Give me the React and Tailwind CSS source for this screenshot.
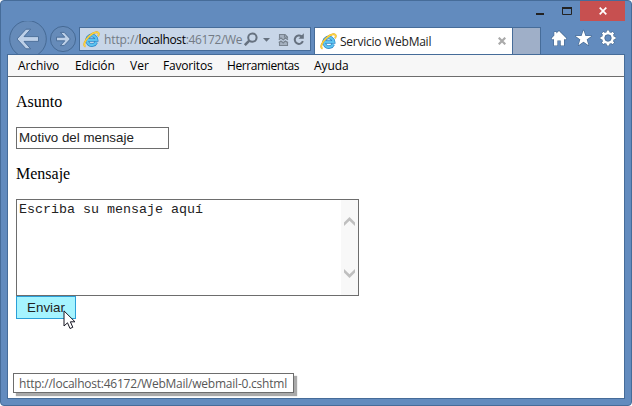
import React from 'react';

const ui = "font-['Open_Sans','Noto_Sans',sans-serif]";

function IELogo({ className }) {
  return (
    <svg className={className} width="17" height="17" viewBox="0 0 17 17" fill="none">
      <path d="M13.2 11.2A4.8 4.8 0 1 1 13.6 9H5" stroke="#2b86c8" strokeWidth="3.6" />
      <path d="M13.2 11.2A4.8 4.8 0 1 1 13.6 9H5" stroke="#5cc3f0" strokeWidth="2.2" />
      <path d="M2.4 15.6C-.2 14.7 1.7 9.4 6.3 5.1C10.7 1 15.2 .2 15.7 2.5C15.9 3.4 15.6 4.3 15.1 5.2" stroke="#e0a320" strokeWidth="1.8" />
      <path d="M2.4 15.6C-.2 14.7 1.7 9.4 6.3 5.1C10.7 1 15.2 .2 15.7 2.5C15.9 3.4 15.6 4.3 15.1 5.2" stroke="#fcd541" strokeWidth="1.2" />
    </svg>
  );
}

function NavButtons() {
  return (
    <svg className="h-[33px] w-[70px] shrink-0 overflow-hidden" viewBox="8 21 70 33">
      <circle cx="28" cy="39" r="18.3" fill="#668bb9" stroke="#466a95" />
      <circle cx="63" cy="39" r="12.6" fill="#668bb9" stroke="#466a95" />
      <path d="M17 39L26 29.2H30.6L24 36.6H38.5V41.4H24L30.6 48.8H26Z" fill="#bdd0e8" stroke="#466a95" strokeWidth=".9" />
      <path d="M70.3 39L64.2 32.4H60.4L64.8 37.2H56.5V40.8H64.8L60.4 45.6H64.2Z" fill="#bdd0e8" stroke="#466a95" strokeWidth=".9" />
    </svg>
  );
}

function AddressBar() {
  return (
    <div className={`${ui} ml-px mt-[6px] flex h-6 w-[232px] shrink-0 border border-[#466c99] bg-[#c8d6e8] text-[12px] leading-[24px] text-[#737b85]`}>
      <IELogo className="ml-[3px] mt-[3px] shrink-0" />
      <div className="ml-[4px] w-[138px] whitespace-nowrap tracking-[-0.35px]">
        <span className="tracking-[-0.1px]">http://</span><span className="tracking-[-0.35px] text-black">localhost</span>:46172/We
      </div>
      <svg className="shrink-0" width="68" height="22" viewBox="242 28 68 22" fill="none">
        <circle cx="252.4" cy="37.6" r="4.2" stroke="#66717f" strokeWidth="2" />
        <path d="M249.3 40.7L244.8 45.2" stroke="#66717f" strokeWidth="2.6" />
        <path d="M263 38H270L266.5 41.7Z" fill="#66717f" />
        <path d="M279.5 38.5V34.5H285L287.5 37V38.5M284.5 34.5V37H287.5M279.5 42V45.5H287.5V42" fill="#a5b1c0" stroke="#78838f" strokeWidth="1.1" />
        <path d="M278.8 39.6L281 38L283.2 39.8L285.3 38L288 39.6M278.8 42.6L281 41L283.2 42.8L285.3 41L288 42.6" stroke="#78838f" strokeWidth="1.3" />
        <path d="M301.6 36.4A4.2 4.2 0 1 0 302.9 41.2" stroke="#66717f" strokeWidth="2" />
        <path d="M303.8 33.2V38.7H298.5Z" fill="#66717f" />
      </svg>
    </div>
  );
}

function Tabs() {
  return (
    <div className="ml-[3px] mt-[6px] flex h-[27px] shrink-0">
      <div className={`${ui} flex w-[199px] border border-b-0 border-[#466c99] bg-white text-[12px] leading-[28px] text-[#222]`}>
        <IELogo className="ml-[5px] mt-[5px] shrink-0" />
        <span className="ml-[3px] flex-1 whitespace-nowrap tracking-[-0.24px]">Servicio WebMail</span>
        <svg className="mr-[6px] mt-[9px]" width="8" height="8" viewBox="0 0 8 8">
          <path d="M.7 .7L7.3 7.3M7.3 .7L.7 7.3" stroke="#aaa" strokeWidth="2.2" />
        </svg>
      </div>
      <div className="w-[28px] border border-b-0 border-l-0 border-[#466c99] bg-[#9fafc8]" />
    </div>
  );
}

function Tools() {
  return (
    <svg className="ml-[10px] mt-[8px] shrink-0" width="66" height="19" viewBox="551 29 66 19">
      <g fill="#fff" stroke="#45688f" strokeWidth="1.2" paintOrder="stroke" strokeLinejoin="round">
        <path d="M559 31L566.5 38.4L565 39.7L564 38.8V45.5H560.7V40.5H557.4V45.5H554V38.8L553 39.7L551.5 38.4L554.3 35.6V32H556.4V33.6Z" />
        <path d="M583.5 30.3L585.5 36H591.5L586.7 39.6L588.5 45.3L583.5 41.8L578.5 45.3L580.3 39.6L575.5 36H581.5Z" />
      </g>
      <g fill="none">
        <circle cx="608" cy="38" r="4.7" stroke="#45688f" strokeWidth="3.4" />
        <path d="M608 30V33.5M608 42.5V46M600 38H603.5M612.5 38H616M602.4 32.4L604.9 34.9M611.1 41.1L613.6 43.6M613.6 32.4L611.1 34.9M604.9 41.1L602.4 43.6" stroke="#45688f" strokeWidth="3.8" />
        <circle cx="608" cy="38" r="4.7" stroke="#fff" strokeWidth="2.6" />
        <path d="M608 30.5V34M608 42V45.5M600.5 38H604M612 38H615.5M602.7 32.7L605 35M611 41L613.3 43.3M613.3 32.7L611 35M605 41L602.7 43.3" stroke="#fff" strokeWidth="2.6" />
        <circle cx="608" cy="38" r="3.1" fill="#628bbe" stroke="#45688f" strokeWidth=".6" />
      </g>
    </svg>
  );
}

const menus = [
  ['Archivo', 'w-[57px] tracking-[-0.1px]'],
  ['Edición', 'w-[55px] tracking-[-0.1px]'],
  ['Ver', 'w-[33px]'],
  ['Favoritos', 'w-[64px] tracking-[-0.2px]'],
  ['Herramientas', 'w-[87px] tracking-[-0.4px]'],
  ['Ayuda', 'w-[50px] tracking-[-0.1px]'],
];

export default function App() {
  return (
    <div className="h-[406px] w-[632px] overflow-hidden bg-white">
      <div className="relative flex h-[406px] w-[632px] flex-col rounded-[4px] border border-[#466c99] bg-[#628bbe] px-[6px] pb-[6px]">
        <header className="relative h-[53px] shrink-0">
          <div className="flex h-5 justify-end">
            <svg width="45" height="20" viewBox="535 1 45 20">
              <path d="M536 13H544V15H536Z" fill="#222" />
              <path d="M562.5 8H571.5V14.5H562.5Z" fill="none" stroke="#222" />
              <path d="M562 8H572" stroke="#222" strokeWidth="2" />
            </svg>
            <div className="flex w-[45px] items-center justify-center bg-[#c75050]">
              <svg width="8" height="8" viewBox="0 0 8 8">
                <path d="M.7 .7L7.3 7.3M7.3 .7L.7 7.3" stroke="#fff" strokeWidth="1.7" />
              </svg>
            </div>
          </div>
          <div className="flex h-[33px] pl-px">
            <NavButtons />
            <AddressBar />
            <Tabs />
            <Tools />
          </div>
        </header>

        <main className="flex min-h-0 flex-1 flex-col border border-[#466c99] bg-white">
          <nav className={`${ui} flex h-[22px] shrink-0 border-b border-[#6d6d6d] bg-[#f7f7f7] pl-[10px] text-[12px] leading-[22px] text-black`}>
            {menus.map(([label, cls]) => (
              <span key={label} className={`${cls} whitespace-nowrap`}>{label}</span>
            ))}
          </nav>
          <form className="flex flex-1 flex-col items-start pl-[8px] pt-[16px] font-['Liberation_Serif',serif] text-[16px] leading-[18px] text-black" onSubmit={(e) => e.preventDefault()}>
            <label>Asunto</label>
            <div className="mt-[16px] h-[22px] w-[153px] border border-[#6d6d6d] pl-[2px] font-['Liberation_Sans',sans-serif] text-[13.33px] leading-[20px] text-[#222]">Motivo del mensaje</div>
            <label className="mt-[16px]">Mensaje</label>
            <div className="mt-[16px] flex h-[97px] w-[343px] border border-[#6d6d6d]">
              <div className="flex-1 pl-[2px] pt-[2px] font-['Liberation_Mono',monospace] text-[13.33px] leading-[16px] text-[#222]">Escriba su mensaje aquí</div>
              <div className="flex w-[17px] flex-col items-center justify-between bg-[#f8f8f8] pb-[17px] pt-[17px]">
                <svg width="11" height="9" viewBox="0 0 11 9"><path d="M0 5.5L5.5 0L11 5.5V9L5.5 3.8L0 9Z" fill="#bfbfbf" /></svg>
                <svg width="11" height="9" viewBox="0 0 11 9"><path d="M0 3.5L5.5 9L11 3.5V0L5.5 5.2L0 0Z" fill="#bfbfbf" /></svg>
              </div>
            </div>
            <button className="relative h-[23px] w-[60px] border border-[#2a9fd8] bg-[#a6f4ff] font-['Liberation_Sans',sans-serif] text-[13.33px] leading-[20px] text-[#222]">
              Enviar
              <svg className="absolute left-[46px] top-[13px]" width="14" height="20" viewBox="0 0 14 20">
                <path d="M1 .9V16L4.5 12.8L7 18.5L9.8 17.3L7.4 11.8H12Z" fill="#fff" stroke="#161622" />
              </svg>
            </button>
          </form>
        </main>
        <div className={`${ui} absolute left-[12px] top-[372px] h-5 w-[281px] whitespace-nowrap border border-[#6d6d6d] bg-white pl-[5px] text-[12px] leading-[19px] tracking-[-0.23px] text-[#575757] shadow-[3px_3px_1px_#aaa]`}>
          http://localhost:46172/WebMail/webmail-0.cshtml
        </div>
      </div>
    </div>
  );
}
